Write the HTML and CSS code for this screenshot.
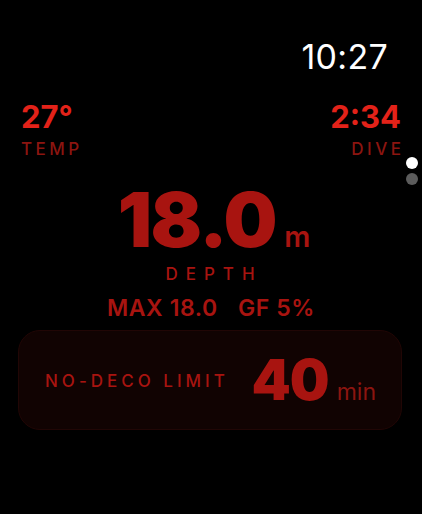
FILE: index.html
```html
<!DOCTYPE html>
<html lang="en">
<head>
    <meta charset="UTF-8">
    <meta name="viewport" content="width=device-width, initial-scale=1.0">
    <title>Dive</title>
    <link rel="stylesheet" href="styles.css">
</head>

<body>
    <div class="screen">
        <header class="status">
            <span class="clock">10:27</span>
        </header>

        <!-- Temp / dive time -->
        <div class="stats">
            <div class="stat">
                <span class="stat-value">27°</span>
                <span class="stat-label">TEMP</span>
            </div>
            <div class="stat stat-right">
                <span class="stat-value">2:34</span>
                <span class="stat-label">DIVE</span>
            </div>
        </div>

        <!-- Depth -->
        <div class="depth">
            <div class="depth-reading">
                <span class="depth-value">18.0</span>
                <span class="depth-unit">m</span>
            </div>
            <span class="depth-label">DEPTH</span>
            <div class="depth-extra">
                <span>MAX 18.0</span>
                <span>GF 5%</span>
            </div>
        </div>

        <!-- No-deco card -->
        <div class="card">
            <span class="card-label">NO-DECO LIMIT</span>
            <div class="card-reading">
                <span class="card-value">40</span>
                <span class="card-unit">min</span>
            </div>
        </div>

        <div class="pager">
            <span class="dot active"></span>
            <span class="dot"></span>
        </div>
    </div>
</body>
</html>
```

FILE: styles.css
```css
/* Reset */
* {
    margin: 0;
    padding: 0;
    box-sizing: border-box;
}

body {
    background: #000;
    font-family: 'Inter', 'Roboto', sans-serif;
    color: #a81410;
}

.screen {
    position: relative;
    width: 422px;
    height: 514px;
    display: flex;
    flex-direction: column;
}

/* Status bar */
.status {
    display: flex;
    justify-content: flex-end;
    padding: 37px 34px 0 0;
}

.clock {
    color: #fff;
    font-size: 34px;
    font-weight: 400;
    line-height: 40px;
    letter-spacing: 0.3px;
}

/* Temp / dive */
.stats {
    display: flex;
    justify-content: space-between;
    padding: 23px 21px 0 21px;
}

.stat {
    display: flex;
    flex-direction: column;
    align-items: flex-start;
}

.stat-right {
    align-items: flex-end;
}

.stat-value {
    color: #e32219;
    font-size: 31px;
    font-weight: 700;
    line-height: 34px;
}

.stat-label {
    color: #8c1510;
    font-size: 17px;
    font-weight: 500;
    letter-spacing: 3.5px;
    margin-right: -3.5px;
    line-height: 22px;
    margin-top: 4px;
}

/* Depth */
.depth {
    display: flex;
    flex-direction: column;
    align-items: center;
    margin-top: 19px;
}

.depth-reading {
    display: flex;
    align-items: baseline;
    gap: 8px;
    margin-left: 6px;
}

.depth-value {
    font-size: 76px;
    font-weight: 900;
    line-height: 80px;
    letter-spacing: -1.5px;
}

.depth-unit {
    font-size: 29px;
    font-weight: 600;
}

.depth-label {
    font-size: 17px;
    font-weight: 500;
    letter-spacing: 8px;
    margin-right: -8px;
    line-height: 22px;
    margin-top: 4px;
    margin-left: -2px;
}

.depth-extra {
    display: flex;
    gap: 20px;
    font-size: 23px;
    font-weight: 600;
    line-height: 28px;
    letter-spacing: 0.6px;
    margin-top: 9px;
}

/* No-deco card */
.card {
    margin: 8px 20px 0 18px;
    height: 100px;
    border-radius: 22px;
    background: #110302;
    border: 1px solid #210605;
    display: flex;
    align-items: center;
    justify-content: space-between;
    padding: 0 25px 0 26px;
}

.card-label {
    font-size: 17px;
    font-weight: 500;
    letter-spacing: 4px;
    margin-top: 2px;
}

.card-reading {
    display: flex;
    align-items: baseline;
    gap: 8px;
}

.card-value {
    font-size: 56px;
    font-weight: 900;
    line-height: 60px;
    letter-spacing: -1px;
}

.card-unit {
    font-size: 23px;
    font-weight: 400;
    color: #8c1510;
}

/* Page indicator */
.pager {
    position: absolute;
    right: 4px;
    top: 157px;
    display: flex;
    flex-direction: column;
    gap: 4px;
}

.dot {
    width: 12px;
    height: 12px;
    border-radius: 50%;
    background: #5c5c5c;
}

.dot.active {
    background: #fff;
}
```
